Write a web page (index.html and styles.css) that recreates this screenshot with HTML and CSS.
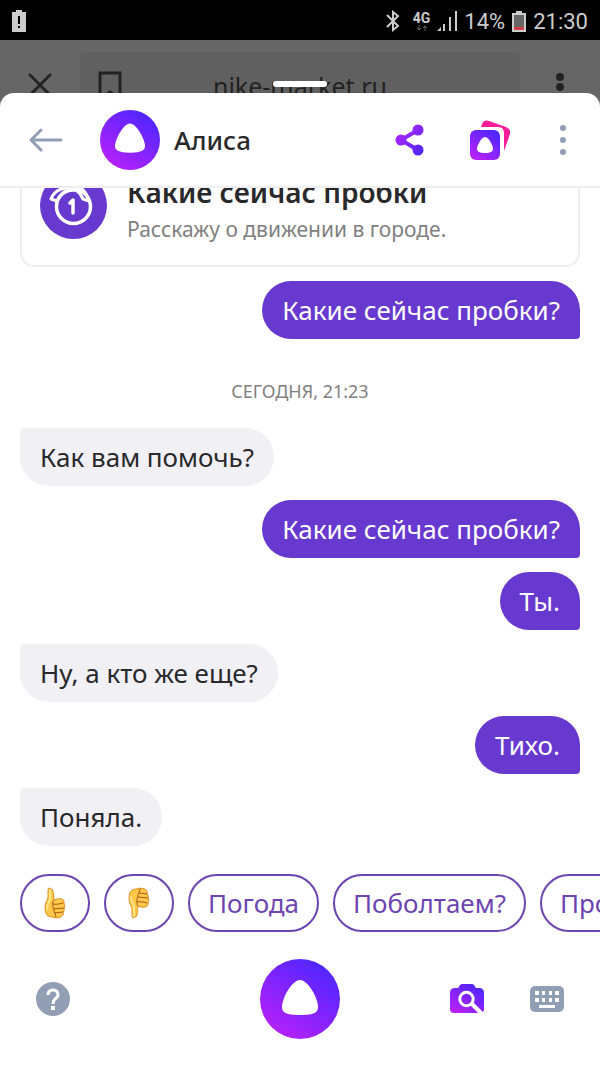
FILE: index.html
```html
<!DOCTYPE html>
<html lang="ru">

<head>
    <meta charset="UTF-8" />
    <meta name="viewport" content="width=device-width, initial-scale=1.0" />
    <title>Алиса</title>
    <link rel="stylesheet" href="styles.css">
</head>

<body>
    <div class="status-bar">
        <svg class="status-left" width="14" height="22" viewBox="0 0 14 22">
            <path d="M4 0h6v2h4v20H0V2h4z" fill="#ccc" />
            <path d="M6 6h2v8H6zM6 16h2v2H6z" fill="#000" />
        </svg>
        <svg width="14" height="22" viewBox="0 0 14 22" fill="none" stroke="#ccc" stroke-width="2">
            <path d="M1 5l11 11-5 4V2l5 4L1 17" />
        </svg>
        <div class="network">
            <span>4G</span>
            <svg width="12" height="6" viewBox="0 0 12 6" fill="none" stroke="#666">
                <path d="M3 0v5M1 3l2 2 2-2M9 6V1M7 3l2-2 2 2" />
            </svg>
        </div>
        <svg class="signal" width="20" height="20" viewBox="0 0 20 20" fill="#ccc">
            <path d="M0 20l4-4v4zM6 13h2v7H6zM12 6h2v14h-2zM18 0h2v20h-2z" />
        </svg>
        <span>14%</span>
        <svg width="14" height="21" viewBox="0 0 14 21">
            <path d="M4 0h6v2h4v19H0V2h4z" fill="#ccc" />
            <path d="M2 4h10v12H2z" fill="#666" />
            <path d="M2 16h10v3H2z" fill="#d0404a" />
        </svg>
        <span>21:30</span>
    </div>

    <div class="browser-bar">
        <svg width="24" height="24" viewBox="0 0 26 26" fill="none" stroke="#222" stroke-width="3" stroke-linecap="round">
            <path d="M2 2l22 22M24 2L2 24" />
        </svg>
        <div class="address">
            <svg width="24" height="30" viewBox="0 0 24 30" fill="none" stroke="#222" stroke-width="3">
                <path d="M2 2h20v26l-10-7-10 7z" />
            </svg>
            <span>nike-market.ru</span>
        </div>
        <svg width="8" height="28" viewBox="0 0 8 28" fill="#222">
            <circle cx="4" cy="4" r="4" />
            <circle cx="4" cy="14" r="4" />
            <circle cx="4" cy="24" r="4" />
        </svg>
    </div>

    <main class="sheet">
        <div class="handle"></div>

        <header class="header">
            <button class="icon-btn" aria-label="Назад">
                <svg width="34" height="24" viewBox="0 0 34 24" fill="none" stroke="#929eb3" stroke-width="3" stroke-linecap="round" stroke-linejoin="round">
                    <path d="M32 12H2M12 2L2 12l10 10" />
                </svg>
            </button>
            <svg class="avatar" width="60" height="60" viewBox="0 0 80 80">
                <defs>
                    <linearGradient id="alice" x1="0.2" y1="0.95" x2="0.8" y2="0.1">
                        <stop offset="0" stop-color="#b621fa" />
                        <stop offset="1" stop-color="#5226ff" />
                    </linearGradient>
                </defs>
                <circle cx="40" cy="40" r="40" fill="url(#alice)" />
                <path d="M40 18C49 18 60 40 60 48C60 53 56 57 40 57S20 53 20 48C20 40 31 18 40 18z" fill="#fff" />
            </svg>
            <h1>Алиса</h1>
            <button class="icon-btn" aria-label="Поделиться">
                <svg width="30" height="32" viewBox="0 0 30 32">
                    <defs>
                        <linearGradient id="share" gradientUnits="userSpaceOnUse" x1="6" y1="10" x2="26" y2="30">
                            <stop offset="0" stop-color="#a326fb" />
                            <stop offset="1" stop-color="#5226ff" />
                        </linearGradient>
                    </defs>
                    <path d="M23 6L6 16l17 10" fill="none" stroke="url(#share)" stroke-width="4" />
                    <g fill="url(#share)">
                        <circle cx="23" cy="6" r="5.5" />
                        <circle cx="6" cy="16" r="5.5" />
                        <circle cx="23" cy="26" r="5.5" />
                    </g>
                </svg>
            </button>
            <button class="icon-btn skills" aria-label="Навыки">
                <svg width="40" height="40" viewBox="0 0 40 40">
                    <path d="M11 7l1-3Q14-1 19 1l17 6q5 2 4 7L34 31V13q0-6-6-6z" fill="#fb1e9c" />
                    <rect y="10" width="30" height="30" rx="6" fill="url(#alice)" />
                    <path d="M15 17C19 17 23 26 23 29C23 31 21 33 15 33S7 31 7 29C7 26 11 17 15 17z" fill="#fff" />
                </svg>
            </button>
            <button class="icon-btn" aria-label="Меню">
                <svg width="6" height="30" viewBox="0 0 6 30" fill="#929eb3">
                    <circle cx="3" cy="3" r="3" />
                    <circle cx="3" cy="15" r="3" />
                    <circle cx="3" cy="27" r="3" />
                </svg>
            </button>
        </header>

        <section class="chat">
            <article class="card">
                <svg width="67" height="67" viewBox="0 0 67 67" fill="none" stroke="#fff" stroke-width="3.5" stroke-linejoin="round">
                    <circle cx="33.5" cy="33.5" r="33.5" fill="#6839cf" stroke="none" />
                    <circle cx="33.5" cy="34.5" r="17" />
                    <path d="M30 31l3-3v13" stroke-linecap="round" />
                    <path d="M34 18C26 13 14 18 11 27L17 29C21 21 27 18 34 18C41 13 46 19 49 29L43 27C40 21 38 18 34 18" stroke-width="3" />
                </svg>
                <div>
                    <h2>Какие сейчас пробки</h2>
                    <p>Расскажу о движении в городе.</p>
                </div>
            </article>

            <div class="message mine">Какие сейчас пробки?</div>
            <time class="date">СЕГОДНЯ, 21:23</time>
            <div class="message">Как вам помочь?</div>
            <div class="message mine">Какие сейчас пробки?</div>
            <div class="message mine">Ты.</div>
            <div class="message">Ну, а кто же еще?</div>
            <div class="message mine">Тихо.</div>
            <div class="message">Поняла.</div>
        </section>

        <div class="suggests">
            <button aria-label="Нравится">
                <svg width="22" height="32" viewBox="0 0 22 32">
                    <g id="thumb" stroke-linejoin="round" stroke-linecap="round">
                        <path d="M7 2Q4-1 4 4v7Q1 15 1 21Q1 30 8 30Q15 32 18 29Q20 28 19 25Q21 23 20 21Q22 19 20 17Q21 13 18 12Q14 11 10 13L9 4Q9 2 7 2z" fill="#ffc84a" stroke="#e39225" />
                        <path d="M6 3v10Q3 17 3 22" fill="none" stroke="#ffe58a" stroke-width="2" />
                        <path d="M10 13Q8 14 9 17Q12 18 19 16M9 17Q8 20 10 22L20 21M10 22Q9 25 11 26L19 25M11 26L12 30" fill="none" stroke="#a65b13" />
                    </g>
                </svg>
            </button>
            <button aria-label="Не нравится">
                <svg width="22" height="32" viewBox="0 0 22 32">
                    <use href="#thumb" transform="matrix(1 0 0 -1 0 32)" />
                </svg>
            </button>
            <button>Погода</button>
            <button>Поболтаем?</button>
            <button>Про</button>
        </div>

        <footer class="toolbar">
            <div class="tools">
                <button class="icon-btn" aria-label="Справка">
                    <svg width="34" height="34" viewBox="0 0 34 34">
                        <circle cx="17" cy="17" r="17" fill="#929eb3" />
                        <path d="M12 13Q12 8 17 8T22 13Q22 15 19 17Q17 19 17 22" fill="none" stroke="#fff" stroke-width="3" />
                        <path d="M15 24h4v4h-4z" fill="#fff" />
                    </svg>
                </button>
            </div>
            <button class="icon-btn" aria-label="Говорить с Алисой">
                <svg width="80" height="80" viewBox="0 0 80 80">
                    <circle cx="40" cy="40" r="40" fill="url(#alice)" />
                    <path d="M40 21C48 21 58 39 58 48C58 53 55 56 40 56S22 53 22 48C22 39 32 21 40 21z" fill="#fff" />
                </svg>
            </button>
            <div class="tools right">
                <button class="icon-btn" aria-label="Поиск по фото">
                    <svg width="34" height="30" viewBox="0 0 34 30">
                        <path d="M8 4l2-3q1-1 2-1h10q1 0 2 1l2 3h3q5 0 5 5v16q0 4-4 4H4q-4 0-4-4V9q0-5 5-5z" fill="url(#alice)" />
                        <circle cx="16.500" cy="15" r="6.700" fill="none" stroke="#fff" stroke-width="3" />
                        <path d="M21 19l11 11" stroke="#fff" stroke-width="4" />
                    </svg>
                </button>
                <button class="icon-btn" aria-label="Клавиатура">
                    <svg width="34" height="26" viewBox="0 0 34 26">
                        <rect width="34" height="26" rx="5" fill="#929eb3" />
                        <path d="M5 5h4v4H5zM12 5h3v4h-3zM19 5h3v4h-3zM25 5h4v4h-4zM5 12h4v4H5zM12 12h3v4h-3zM19 12h3v4h-3zM25 12h4v4h-4zM9 19h16v3H9z" fill="#fff" />
                    </svg>
                </button>
            </div>
        </footer>
    </main>
</body>

</html>
```

FILE: styles.css
```css
* {
    box-sizing: border-box;
}

body {
    margin: 0;
    height: 100vh;
    display: flex;
    flex-direction: column;
    overflow: hidden;
    background: #666;
    color: #29292c;
    font-family: "Noto Sans", sans-serif;
    font-size: 26px;
}

h1,
h2,
p {
    margin: 0;
}

button {
    font: inherit;
    cursor: pointer;
}

svg {
    display: block;
    flex-shrink: 0;
}

.icon-btn {
    padding: 0;
    border: none;
    background: none;
}

/* Статус-бар телефона */
.status-bar {
    flex: 0 0 40px;
    display: flex;
    align-items: center;
    gap: 7px;
    padding: 2px 12px 0;
    background: #000;
    color: #ccc;
    font-family: Roboto, sans-serif;
    font-size: 22px;
}

.status-left {
    margin-right: auto;
}

.network {
    margin-left: 6px;
    font-size: 14px;
    font-weight: bold;
    line-height: 14px;
}

.network svg {
    margin: 0 auto;
}

/* Строка браузера под шторкой */
.browser-bar {
    flex: 0 0 66px;
    display: flex;
    align-items: flex-start;
    gap: 28px;
    padding: 12px 36px 0 28px;
    overflow: hidden;
}

.browser-bar > svg {
    margin-top: 21px;
}

.address {
    flex: 1;
    display: flex;
    align-items: center;
    height: 68px;
    margin-right: 8px;
    padding: 0 18px;
    border-radius: 4px;
    background: #606060;
    color: #222;
    font-size: 25px;
}

.address span {
    flex: 1;
    padding-right: 24px;
    text-align: center;
}

/* Шторка Алисы */
.sheet {
    position: relative;
    flex: 1;
    min-height: 0;
    display: flex;
    flex-direction: column;
    margin-top: -13px;
    border-radius: 14px 14px 0 0;
    background: #fff;
}

.handle {
    position: absolute;
    top: -12px;
    left: 50%;
    width: 54px;
    height: 6px;
    margin-left: -27px;
    border-radius: 3px;
    background: #fff;
}

.header {
    flex: 0 0 95px;
    display: flex;
    align-items: center;
    padding: 0 34px 0 29px;
    border-bottom: 2px solid #eee;
}

.header h1 {
    flex: 1;
    font-size: 26px;
    font-weight: 500;
}

.avatar {
    margin: 0 14px 0 37px;
}

.skills {
    margin: 0 50px 0 45px;
}

.chat {
    flex: 1;
    min-height: 0;
    display: flex;
    flex-direction: column;
    justify-content: flex-end;
    align-items: flex-start;
    gap: 14px;
    padding: 0 20px 28px;
    overflow: hidden;
}

.card {
    align-self: stretch;
    flex-shrink: 0;
    display: flex;
    align-items: flex-end;
    gap: 20px;
    padding: 18px;
    border: 2px solid #eee;
    border-radius: 14px;
}

.card svg {
    margin-bottom: 8px;
}

.card h2 {
    font-size: 28px;
    font-weight: 600;
    line-height: 38px;
}

.card p {
    color: #808080;
    font-size: 21px;
    line-height: 36px;
}

.message {
    flex-shrink: 0;
    padding: 0 20px;
    border-radius: 4px 29px 29px 29px;
    background: #f0f0f5;
    line-height: 58px;
}

.mine {
    align-self: flex-end;
    border-radius: 29px 29px 4px 29px;
    background: #6839cf;
    color: #fff;
}

.date {
    align-self: center;
    padding: 25px 0 10px;
    color: #808080;
    font-size: 18px;
    line-height: 26px;
}

.suggests {
    display: flex;
    gap: 14px;
    padding-left: 20px;
    overflow: hidden;
}

.suggests button {
    flex-shrink: 0;
    height: 58px;
    padding: 0 18px;
    border: 2px solid #6d45b0;
    border-radius: 29px;
    background: #fff;
    color: #6d45b0;
}

.suggests svg {
    margin: 0 4px;
}

.toolbar {
    display: flex;
    align-items: center;
    padding: 27px 36px;
}

.tools {
    flex: 1;
    display: flex;
    align-items: center;
}

.right {
    justify-content: flex-end;
    gap: 46px;
}
```
